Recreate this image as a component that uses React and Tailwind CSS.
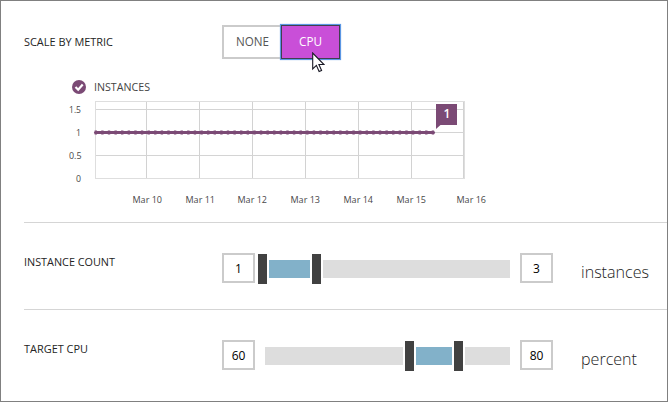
const X_TICKS = [
  { x: 146.5, label: 'Mar 10', tx: 132.5 },
  { x: 199.5, label: 'Mar 11', tx: 185.5 },
  { x: 252.5, label: 'Mar 12', tx: 237.5 },
  { x: 305.5, label: 'Mar 13', tx: 290.5 },
  { x: 358.5, label: 'Mar 14', tx: 343.5 },
  { x: 411.5, label: 'Mar 15', tx: 396.5 },
  { x: 463.5, label: 'Mar 16', tx: 456.5 },
];
const Y_TICKS = [
  { y: 109.5, label: '1.5', tx: 69, w: 12 },
  { y: 132.5, label: '1', tx: 76, w: 5 },
  { y: 155.5, label: '0.5', tx: 69, w: 12.5 },
  { y: 178.5, label: '0', tx: 76, w: 5 },
];
const POINTS = Array.from({ length: 52 }, (_, i) => 95.8 + i * 6.61);

function Label({ text, width, className = '', fill = '#252525', size = 11.5 }) {
  return (
    <svg width={width + 4} height="20" className={`block overflow-visible ${className}`}>
      <text x="0" y="14" fontSize={size} fill={fill} textLength={width} lengthAdjust="spacingAndGlyphs">
        {text}
      </text>
    </svg>
  );
}

function Chart() {
  return (
    <svg viewBox="60 96 440 116" width="440" height="116" className="block">
      <g shapeRendering="crispEdges" fill="none" strokeWidth="1">
        <path d="M95.5 101.5H464.5V178.5H95.5Z" stroke="#dedede" />
        {X_TICKS.map((t) => (
          <path key={t.label} d={`M${t.x} 102V178`} stroke="#d2d2d2" />
        ))}
        {Y_TICKS.slice(0, 3).map((t) => (
          <path key={t.label} d={`M96 ${t.y}H464`} stroke="#d4d4d4" />
        ))}
      </g>
      {POINTS.map((x) => (
        <rect key={x} x={x - 1.2} y="130" width="2.4" height="5" fill="#7b4a75" opacity="0.5" />
      ))}
      <path d="M95.5 132.5H433.5" stroke="#7b4a75" strokeWidth="3" strokeLinecap="round" />
      <path d="M436 104h21v21h-16.500l-4.500 4z" fill="#7b4a75" />
      <text x="443.500" y="118" fontSize="12" fill="#fff" fontWeight="600">1</text>
      <g fontSize="9.500" fill="#484848">
        {Y_TICKS.map((t) => (
          <text key={t.label} x={t.tx} y={t.y + 3.5} textLength={t.w} lengthAdjust="spacingAndGlyphs">{t.label}</text>
        ))}
        {X_TICKS.map((t) => (
          <text key={t.label} x={t.tx} y="203" textLength="29.500" lengthAdjust="spacingAndGlyphs">{t.label}</text>
        ))}
      </g>
    </svg>
  );
}

function ValueBox({ children }) {
  return (
    <div className="flex h-[30px] w-[33px] items-center justify-center border-2 border-[#cbcbcb] pt-px text-[12px] leading-none text-black">
      {children}
    </div>
  );
}

function Handle() {
  return <div className="h-[30px] w-[9px] shrink-0 translate-y-px bg-[#414141]" />;
}

function Bar({ className }) {
  return <div className={`h-[18px] shrink-0 translate-y-px ${className}`} />;
}

function Cursor() {
  return (
    <svg width="13" height="21" viewBox="0 0 13 21" className="absolute left-[30px] top-[26px]">
      <path d="M.7 1v16l3.700-3.600 2.700 6.100 2.500-1.100-2.700-5.900h5.100z" fill="#fff" stroke="#181824" strokeWidth="1.100" />
    </svg>
  );
}

export default function App() {
  return (
    <div className="h-[402px] w-[668px] overflow-hidden border border-[#808080] bg-white pl-[23px] font-['Open_Sans',sans-serif]">
      <section className="h-[221px]">
        <div className="flex pt-[24px]">
          <div className="w-[198px] pt-[7px]">
            <Label text="SCALE BY METRIC" width={89} />
          </div>
          <div className="flex">
            <div className="h-[34px] w-[59px] border-2 border-r-0 border-[#cbcbcb] pl-[12px] pt-[5px]">
              <Label text="NONE" width={33} fill="#555" size={12} />
            </div>
            <div className="relative h-[34px] w-[59px] border border-[#40404f] bg-[#c94fd8] pl-[17px] pt-[6px] shadow-[0_0_0_1px_#5b97e4,0_0_1px_1px_#8fb9ee]">
              <Label text="CPU" width={23} fill="#fff" size={12} className="font-medium" />
              <Cursor />
            </div>
          </div>
        </div>
        <div className="ml-[48px] mt-[18px] flex h-[19px] items-center">
          <svg width="14" height="14" viewBox="0 0 14 14" className="mt-px">
            <circle cx="7" cy="7" r="7" fill="#7b4a75" />
            <path d="M3.500 7l2.700 2.700L10.700 4.500" fill="none" stroke="#fff" strokeWidth="2.200" />
          </svg>
          <Label text="INSTANCES" width={56} className="ml-[8px]" fill="#444" />
        </div>
        <div className="ml-[36px]">
          <Chart />
        </div>
      </section>

      <section className="flex h-[87px] border-t border-[#d5d5d5]">
        <div className="w-[198px] pt-[29px]">
          <Label text="INSTANCE COUNT" width={91} />
        </div>
        <div className="mt-[30px] flex h-[30px] items-center">
          <ValueBox>1</ValueBox>
          <div className="flex w-[265px] items-center gap-[2px] pl-[3px]">
            <Handle />
            <Bar className="w-[41px] bg-[#82b1c9]" />
            <Handle />
            <Bar className="w-[187px] bg-[#ddd]" />
          </div>
          <ValueBox>3</ValueBox>
          <Label text="instances" width={68} size={17} fill="#222" className="ml-[28px] mt-[12px] font-light" />
        </div>
      </section>

      <section className="flex h-[91px] border-t border-[#d5d5d5]">
        <div className="w-[198px] pt-[29px]">
          <Label text="TARGET CPU" width={64} />
        </div>
        <div className="mt-[30px] flex h-[30px] items-center">
          <ValueBox>60</ValueBox>
          <div className="flex w-[265px] items-center gap-[2px] pl-[10px]">
            <Bar className="w-[138px] bg-[#ddd]" />
            <Handle />
            <Bar className="w-[36px] bg-[#82b1c9]" />
            <Handle />
            <Bar className="w-[45px] bg-[#ddd]" />
          </div>
          <ValueBox>80</ValueBox>
          <Label text="percent" width={56} size={17} fill="#222" className="ml-[28px] mt-[12px] font-light" />
        </div>
      </section>
    </div>
  );
}
